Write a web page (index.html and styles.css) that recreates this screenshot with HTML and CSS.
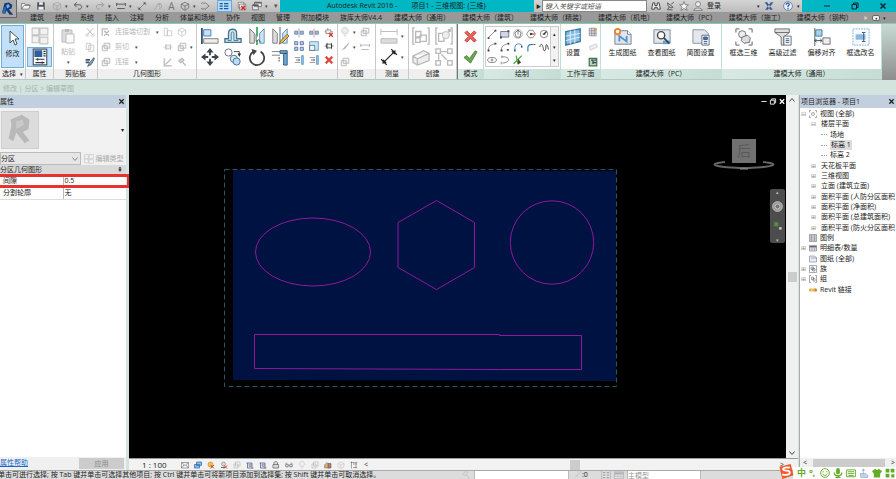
FILE: index.html
```html
<!DOCTYPE html>
<html lang="zh-CN">
<head>
<meta charset="utf-8">
<title>Autodesk Revit 2016</title>
<link rel="stylesheet" href="styles.css">
</head>
<body>
<svg class="sprite" aria-hidden="true">
  <symbol id="logo" viewBox="0 0 16 16"><path d="M4 2l5-1 4 3-1 4-3 1 5 6h-4l-4-5-1 4-4-1z" fill="#123b78"/><path d="M6 4l3-1 1 3-3 2z" fill="#7fb0e6"/><path d="M1 13l3-7 2 1-2 7z" fill="#2d6cb5"/></symbol>
  <symbol id="open" viewBox="0 0 16 16"><path d="M1 13V4h5l1 2h6v2M1 13l4-6h10l-3 6z" fill="#f3f3f3" stroke="#555"/></symbol>
  <symbol id="save" viewBox="0 0 16 16"><path d="M2 2h12v12H2z" fill="#4c5460"/><path d="M5 2h6v4H5zM4 9h8v5H4z" fill="#eee"/></symbol>
  <symbol id="box" viewBox="0 0 16 16"><path d="M2 5l6-3 6 3v6l-6 4-6-4zM2 5l6 3 6-3M8 8v6" fill="none" stroke="currentColor"/></symbol>
  <symbol id="undo" viewBox="0 0 16 16"><path d="M6 2L2 6l4 4M2 6h8c5 0 5 7 0 7H8" fill="none" stroke="currentColor" stroke-width="1.500"/></symbol>
  <symbol id="redo" viewBox="0 0 16 16"><path d="M10 2l4 4-4 4M14 6H6c-5 0-5 7 0 7h2" fill="none" stroke="currentColor" stroke-width="1.500"/></symbol>
  <symbol id="measure" viewBox="0 0 16 16"><path d="M1 3v5M15 3v5M1 5h14M2 12h12" fill="none" stroke="currentColor" stroke-width="1.500"/></symbol>
  <symbol id="dim" viewBox="0 0 16 16"><path d="M3 13L13 3M1 10l5 5M10 1l5 5" fill="none" stroke="currentColor"/><path d="M2 14l1-4 3 3zM14 2l-4 1 3 3z" fill="currentColor"/></symbol>
  <symbol id="tag" viewBox="0 0 16 16"><path d="M2 14l4-5M6 9a4 4 0 1 1 4 3M8 5h4M10 5v4" fill="none" stroke="currentColor"/></symbol>
  <symbol id="circ" viewBox="0 0 16 16"><path d="M6 2l7 6-7 6M6 4a5 5 0 1 0 0 8" fill="none" stroke="currentColor"/></symbol>
  <symbol id="lines" viewBox="0 0 16 16"><path d="M1 4h5M1 8h5M1 12h5M8 4h7M8 8h7M8 12h7" stroke="#175a9b" stroke-width="2"/></symbol>
  <symbol id="closewin" viewBox="0 0 16 16"><path d="M2 2h9v9H2zM4 5h10v9H4z" fill="#eee" stroke="#666"/><path d="M7 8l6 6M13 8l-6 6" stroke="#d22" stroke-width="2"/></symbol>
  <symbol id="wins" viewBox="0 0 16 16"><path d="M4 2h11v7H4zM1 6h9v8H1z" fill="#eee" stroke="#444"/><path d="M4 2h11v2H4zM1 6h9v2H1z" fill="#555"/></symbol>
  <symbol id="binoc" viewBox="0 0 16 16"><path d="M3 3h3v4h4V3h3l2 10h-5v-3H6v3H1z" fill="#eee" stroke="#444" stroke-width="1.500"/></symbol>
  <symbol id="dish" viewBox="0 0 16 16"><path d="M4 3c0 7 5 9 9 7L4 3M7 9l-3 5h8M10 5l4-3" fill="none" stroke="#555" stroke-width="1.500"/></symbol>
  <symbol id="star" viewBox="0 0 16 16"><path d="M8 1l2 5h5l-4 4 2 5-5-3-5 3 2-5-4-4h5z" fill="#f5f5f5" stroke="#555"/></symbol>
  <symbol id="person" viewBox="0 0 16 16"><circle cx="8" cy="5" r="4" fill="#eee" stroke="#555"/><path d="M1 15c1-5 13-5 14 0z" fill="#ddd" stroke="#555"/></symbol>
  <symbol id="exch" viewBox="0 0 16 16"><path d="M1 2h4l9 12h-4zM15 2h-4L2 14h4z" fill="#34589a"/></symbol>
  <symbol id="help" viewBox="0 0 16 16"><circle cx="8" cy="8" r="7" fill="#e8f1ff" stroke="#456"/><path d="M5 6c0-4 6-3 5 0L8 8v2M8 11v2" fill="none" stroke="#245cad" stroke-width="2"/></symbol>
  <symbol id="min" viewBox="0 0 16 16"><path d="M2 8h12" stroke="currentColor" stroke-width="2"/></symbol>
  <symbol id="max" viewBox="0 0 16 16"><path d="M2 5h9v9H2zM5 5V2h9v9h-3" fill="none" stroke="currentColor" stroke-width="2"/></symbol>
  <symbol id="x" viewBox="0 0 16 16"><path d="M3 3l10 10M13 3L3 13" stroke="currentColor" stroke-width="3"/></symbol>
  <symbol id="up" viewBox="0 0 16 16"><path d="M3 11l5-6 5 6" fill="none" stroke="#444" stroke-width="2"/></symbol>
  <symbol id="down" viewBox="0 0 16 16"><path d="M3 5l5 6 5-6" fill="none" stroke="#444" stroke-width="2"/></symbol>
  <symbol id="cursor" viewBox="0 0 16 16"><path d="M5 1v12l3-3 2 5 2-1-2-5h4z" fill="#fff" stroke="#455"/></symbol>
  <symbol id="types" viewBox="0 0 16 16"><path d="M1 1h6v6H1zM8 1h7v6H8zM1 8h6v6H1zM8 9h7v6H8z" fill="#f2f2f2" stroke="#c4c4c4"/></symbol>
  <symbol id="props" viewBox="0 0 16 16"><path d="M2 1h12v14H2z" fill="#fff" stroke="#456"/><path d="M3 2h7v6H3z" fill="#2d5f9f"/><path d="M11 3h2M11 5h2M11 7h2M4 10h8M4 13h8M6 9v2M10 12v2" stroke="#334"/></symbol>
  <symbol id="paste" viewBox="0 0 16 16"><path d="M2 2h10v12H2z" fill="#ddd" stroke="#bbb"/><path d="M5 1h4v3H5z" fill="#bbb"/><path d="M6 6h8v9H6z" fill="#fafafa" stroke="#bbb"/></symbol>
  <symbol id="cut" viewBox="0 0 16 16"><path d="M3 2l9 10M13 2L4 12" stroke="currentColor" stroke-width="1.500"/><circle cx="3" cy="13" r="2" fill="none" stroke="currentColor"/><circle cx="13" cy="13" r="2" fill="none" stroke="currentColor"/></symbol>
  <symbol id="copy" viewBox="0 0 16 16"><path d="M2 2h7v10H2zM6 5h8v10H6z" fill="#f8f8f8" stroke="currentColor"/></symbol>
  <symbol id="match" viewBox="0 0 16 16"><path d="M1 3h7v3H1zM1 7h6v3H1z" fill="#456"/><path d="M14 1L7 10l-3 5 6-3 5-9z" fill="#8ab" stroke="#234"/></symbol>
  <symbol id="joincut" viewBox="0 0 16 16"><path d="M2 2v12M2 3h9M5 6l8 8M13 6l-8 8" stroke="currentColor" stroke-width="2" fill="none"/></symbol>
  <symbol id="boxes" viewBox="0 0 16 16"><path d="M5 2h9v8h-9zM2 6h8v8H2z" fill="#f5f5f5" stroke="currentColor" stroke-width="1.500"/></symbol>
  <symbol id="wall" viewBox="0 0 16 16"><path d="M2 2h5v12H2zM7 6h7v8H7z" fill="none" stroke="currentColor"/></symbol>
  <symbol id="hammer" viewBox="0 0 16 16"><path d="M3 6l5-4 3 3-5 4zM8 7l6 7" fill="#ddd" stroke="currentColor" stroke-width="2"/></symbol>
  <symbol id="angle" viewBox="0 0 16 16"><path d="M2 2v12h12M4 12l9-9" fill="none" stroke="currentColor" stroke-width="2"/></symbol>
  <symbol id="align" viewBox="0 0 20 20"><path d="M1 1v18" stroke="#357" stroke-width="2"/><path d="M3 3h8v7H3z" fill="#c5e3fa" stroke="#47a"/><path d="M3 13h16v5H3z" fill="#eee" stroke="#777"/></symbol>
  <symbol id="offset" viewBox="0 0 20 20"><path d="M1 17h18v-4h-5V7c0-6-9-6-9 0v6H1z" fill="#d4e9f8" stroke="#478" stroke-width="1.500"/><path d="M4 15h4V7c0-2 3-2 3 0v8h5" fill="none" stroke="#478"/></symbol>
  <symbol id="mirror" viewBox="0 0 20 20"><path d="M2 2l5 5v11H2z" fill="#ddd" stroke="#777"/><path d="M18 2l-5 5v11h5z" fill="#c8e5fa" stroke="#68a"/><path d="M10 0v20" stroke="#4a6" stroke-width="2"/><path d="M9 8v8l3-2 2 3" fill="#fff" stroke="#555"/></symbol>
  <symbol id="mirror2" viewBox="0 0 20 20"><path d="M2 2l5 5v11H2z" fill="#ddd" stroke="#777"/><path d="M18 2l-5 5v11h5z" fill="#c8e5fa" stroke="#68a"/><path d="M10 0v18" stroke="#357"/><path d="M18 8l-7 7-2 4 4-2 7-7z" fill="#ecb73e" stroke="#765"/></symbol>
  <symbol id="move" viewBox="0 0 20 20"><path d="M10 0l4 5h-3v3H9V5H6zM10 20l4-5h-3v-3H9v3H6zM0 10l5-4v3h3v2H5v3zM20 10l-5-4v3h-3v2h3v3z" fill="#3d434b"/></symbol>
  <symbol id="copyobj" viewBox="0 0 20 20"><circle cx="5" cy="5" r="4" fill="#fff" stroke="#667"/><path d="M11 4h6v4" fill="none" stroke="#333"/><path d="M15 6l2 4 2-4z" fill="#333"/><circle cx="11" cy="12" r="4" fill="#d0e9fb" stroke="#468"/><circle cx="14" cy="15" r="4" fill="#b8dcf7" stroke="#468"/></symbol>
  <symbol id="rotate" viewBox="0 0 20 20"><path d="M6 4a8 8 0 1 0 8 0" fill="none" stroke="#444" stroke-width="2"/><path d="M4 1l6 2-4 5z" fill="#444"/></symbol>
  <symbol id="trim" viewBox="0 0 20 20"><path d="M1 4h9M1 8h9" stroke="#777"/><path d="M10 3h8v3h-8zM14 6h4v13h-4z" fill="#68aadd" stroke="#357"/><path d="M9 10v6" stroke="#333" stroke-dasharray="2 1"/></symbol>
  <symbol id="split" viewBox="0 0 16 16"><path d="M1 5h5v5H1zM10 5h5v5h-5z" fill="#8fc1e8" stroke="#568"/><path d="M8 1v14" stroke="#777"/></symbol>
  <symbol id="splitr" viewBox="0 0 16 16"><path d="M1 5h5v5H1zM10 5h5v5h-5z" fill="#8fc1e8" stroke="#568"/><path d="M8 1v14" stroke="#e64b4b"/></symbol>
  <symbol id="unpin" viewBox="0 0 16 16"><path d="M3 3h8v6H3zM1 6h2M11 6h3M6 0v3" fill="#eee" stroke="#666"/><path d="M8 8l6 6M14 8l-6 6" stroke="#d33" stroke-width="2"/></symbol>
  <symbol id="pin" viewBox="0 0 16 16"><path d="M4 5h8v6H4zM1 8h3M12 8h3M5 3v10M12 3v10" fill="#eee" stroke="currentColor"/></symbol>
  <symbol id="array" viewBox="0 0 16 16"><path d="M1 1h5v5H1zM10 1h5v5h-5zM1 10h5v5H1zM10 10h5v5h-5z" fill="#a9d4f3" stroke="#347"/></symbol>
  <symbol id="scale" viewBox="0 0 16 16"><path d="M1 1h14v14H1z" fill="#c7e4f9" stroke="#47a"/><path d="M1 7h8v8H1z" fill="#f5f5f5" stroke="#357"/></symbol>
  <symbol id="trims" viewBox="0 0 16 16"><path d="M1 4h9M1 12h9" stroke="#666"/><path d="M12 1h3v14h-3z" fill="#8fc1e8" stroke="#458ac2"/><path d="M3 8h6M7 6l2 2-2 2" fill="none" stroke="#333"/></symbol>
  <symbol id="del" viewBox="0 0 16 16"><path d="M2 4l2-2 4 4 4-4 2 2-4 4 4 4-2 2-4-4-4 4-2-2 4-4z" fill="#e8463f" stroke="#b72c27"/></symbol>
  <symbol id="bulb" viewBox="0 0 16 16"><path d="M6 11c-6-4-3-10 2-10s8 6 2 10zM6 14h4" fill="#eee" stroke="currentColor"/></symbol>
  <symbol id="brush" viewBox="0 0 16 16"><path d="M14 1L7 8l-5 6 7-4 6-8z" fill="currentColor"/></symbol>
  <symbol id="ruler" viewBox="0 0 20 20"><path d="M1 2v7M19 2v7M1 5h18" stroke="currentColor" fill="none"/><path d="M1 13h18v5H1z" fill="#ddd" stroke="currentColor"/></symbol>
  <symbol id="parts" viewBox="0 0 20 20"><path d="M3 1H1v18h2M17 1h2v18h-2M4 5h6v6H4zM9 9h7v7H9zM4 12h5v5H4z" fill="none" stroke="currentColor" stroke-width="1.500"/></symbol>
  <symbol id="asm" viewBox="0 0 20 20"><path d="M3 1H1v18h2M17 1h2v18h-2M4 7h6v9H4z" fill="none" stroke="currentColor" stroke-width="1.500"/><circle cx="12" cy="9" r="4" fill="#eee" stroke="currentColor"/><circle cx="16" cy="4" r="2" fill="currentColor"/></symbol>
  <symbol id="group" viewBox="0 0 20 20"><path d="M1 9l12-6 6 3v8l-13 5-5-3zM1 9l5 3 13-6M6 12v7" fill="#eee" stroke="currentColor" stroke-width="1.500"/></symbol>
  <symbol id="similar" viewBox="0 0 20 20"><path d="M1 1h5v5H1zM14 1h5v5h-5zM1 14h5v5H1zM14 14h5v5h-5zM7 4h6M4 7v6M7 7l6 6" fill="none" stroke="currentColor" stroke-width="1.500"/></symbol>
  <symbol id="no" viewBox="0 0 16 16"><path d="M2 4l2-2 4 4 4-4 2 2-4 4 4 4-2 2-4-4-4 4-2-2 4-4z" fill="#ed6359" stroke="#ca443c"/></symbol>
  <symbol id="yes" viewBox="0 0 16 16"><path d="M1 9l3-2 3 3 6-8 2 1-7 12z" fill="#6da552" stroke="#4d8938"/></symbol>
  <symbol id="line" viewBox="0 0 16 16"><path d="M2 14L14 2" stroke="#444"/><path d="M1 13h3v3H1zM12 1h3v3h-3z" fill="#444"/></symbol>
  <symbol id="rect" viewBox="0 0 16 16"><path d="M1 4h13v9H1z" fill="#d2d8e8" stroke="#445"/><path d="M12 2h3v3h-3zM0 12h3v3H0z" fill="#445"/></symbol>
  <symbol id="poly" viewBox="0 0 16 16"><circle cx="8" cy="8" r="7" fill="none" stroke="#999"/><path d="M8 2l5 4-2 7H5L3 6zM8 1v8" fill="none" stroke="#334"/></symbol>
  <symbol id="polyr" viewBox="0 0 16 16"><path d="M5 2h6l4 6-4 6H5L1 8z" fill="none" stroke="#555"/><path d="M8 8h6" stroke="#e33" stroke-width="2"/><circle cx="8" cy="8" r="2" fill="#444"/></symbol>
  <symbol id="circle" viewBox="0 0 16 16"><circle cx="8" cy="8" r="6" fill="none" stroke="#444"/><path d="M8 8l4-4M6 8h4" stroke="#333" stroke-width="2"/></symbol>
  <symbol id="arc" viewBox="0 0 16 16"><path d="M2 14C2 7 7 3 14 3" fill="none" stroke="#555"/><path d="M1 12h3v3H1zM12 1h3v3h-3z" fill="#444"/></symbol>
  <symbol id="arcc" viewBox="0 0 16 16"><path d="M2 14C2 7 7 3 14 3" fill="none" stroke="#555"/><path d="M1 12h3v3H1zM12 1h3v3h-3zM11 11h3v3h-3z" fill="#444"/></symbol>
  <symbol id="fillet" viewBox="0 0 16 16"><path d="M3 15V9c0-4 3-6 6-6s5 1 5 4" fill="none" stroke="#3689c9" stroke-width="1.500"/><path d="M2 12h2v3H2zM13 6h2v3h-2z" fill="#345"/></symbol>
  <symbol id="corner" viewBox="0 0 16 16"><path d="M3 15V9c0-4 3-5 5-5" fill="none" stroke="#3689c9" stroke-width="2"/><path d="M8 4h7" stroke="#345" stroke-width="1.500" stroke-dasharray="3 1"/></symbol>
  <symbol id="spline" viewBox="0 0 16 16"><path d="M1 8c3-9 5-2 6 3s4 4 4-3 3-4 4 4" fill="none" stroke="#444" stroke-width="1.500"/></symbol>
  <symbol id="ellipse" viewBox="0 0 16 16"><ellipse cx="8" cy="8" rx="7" ry="4" fill="none" stroke="#444"/><path d="M6 8h4M8 6v4" stroke="#444"/></symbol>
  <symbol id="earc" viewBox="0 0 16 16"><path d="M3 3c14-1 14 9 1 10M2 11v4M3 1v4" fill="none" stroke="#444"/></symbol>
  <symbol id="pick" viewBox="0 0 16 16"><path d="M1 14L14 1M5 1l3 14" stroke="#49a943" stroke-width="2"/><path d="M8 6v9l5-3z" fill="#444"/></symbol>
  <symbol id="plane" viewBox="0 0 20 20"><path d="M2 4l16-3v14L2 19z" fill="#85bde3" stroke="#3c75a2" stroke-width="1.500"/><path d="M2 9l16-3M2 14l16-4M7 3v15M12 2v15" stroke="#e7f5ff"/></symbol>
  <symbol id="grid" viewBox="0 0 16 16"><path d="M2 2h11v12H2zM2 6h11M2 10h11M6 2v12M10 2v12" fill="#eee" stroke="#667"/><path d="M11 1l4 2-3 4z" fill="#e9a83c"/></symbol>
  <symbol id="ref" viewBox="0 0 16 16"><path d="M2 7l11-4 2 5-11 5z" fill="#eee" stroke="#bbb"/></symbol>
  <symbol id="viewer" viewBox="0 0 16 16"><path d="M2 2h12v12H2z" fill="#b6d6b8" stroke="#487151" stroke-width="2"/><path d="M5 5h3v6M9 9h4M10 5h3" stroke="#345" stroke-width="2" fill="none"/></symbol>
  <symbol id="sheet" viewBox="0 0 20 20"><path d="M1 3h14l4 4v11H1z" fill="#e0e5ec" stroke="#6b7d92"/><path d="M15 3v4h4" fill="#fff" stroke="#6b7d92"/><path d="M6 15V9l8 6V9" fill="none" stroke="#5590cc" stroke-width="2"/><circle cx="4" cy="4" r="3" fill="#fff" stroke="#e5842a" stroke-width="2"/></symbol>
  <symbol id="look" viewBox="0 0 20 20"><path d="M1 2h18v15H1z" fill="#e3e7ec" stroke="#74869a"/><path d="M11 14h8v4h-8z" fill="#65a1cf"/><circle cx="9" cy="8" r="4" fill="#fff" stroke="#444" stroke-width="1.500"/><path d="M12 11l6 6" stroke="#345" stroke-width="2"/></symbol>
  <symbol id="setsheet" viewBox="0 0 20 20"><path d="M1 2h13l4 4v11H1z" fill="#e4e7eb" stroke="#85909b"/><path d="M11 8h8v11h-8z" fill="#fff" stroke="#4d6682"/><path d="M13 10h4v3h-4zM13 15h4M13 17h4" fill="#3a78bb" stroke="#357"/></symbol>
  <symbol id="sel3d" viewBox="0 0 20 20"><path d="M1 5V1h4M15 1h4v4M19 15v4h-4M5 19H1v-4" fill="none" stroke="#555"/><circle cx="8" cy="7" r="4" fill="#eee" stroke="#667"/><path d="M8 10l6-2 3 3-1 5-6 1-3-3z" fill="#ddd" stroke="#667"/></symbol>
  <symbol id="filter" viewBox="0 0 20 20"><path d="M1 1h16v4l-6 5v9H8v-9L1 5zM1 5h16" fill="#e0e0e0" stroke="#666"/><path d="M11 9h8v10h-8z" fill="#fff" stroke="#567"/><path d="M13 12h4M13 14h4M13 16h4" stroke="#357"/></symbol>
  <symbol id="shift" viewBox="0 0 20 20"><path d="M2 0v20" stroke="#555"/><path d="M3 2h7v7H3z" fill="#a4d3f5" stroke="#478"/><path d="M11 11h8v7h-8z" fill="#eee" stroke="#667"/><path d="M2 14h8M4 12l-2 2 2 2M8 12l2 2-2 2" fill="none" stroke="#345"/></symbol>
  <symbol id="rename" viewBox="0 0 20 20"><path d="M1 1h18v18H1z" fill="#f6fbff" stroke="#7ca8cd" stroke-dasharray="2 1"/><path d="M4 7h11v6H4z" fill="#8cb9de"/><path d="M13 5v10M11 5h4M11 15h4" stroke="#357"/></symbol>
  <symbol id="mail" viewBox="0 0 16 16"><path d="M1 3h14v11H1zM1 3l7 6 7-6M1 14l5-6M15 14l-5-6" fill="none" stroke="#555"/></symbol>
  <symbol id="style" viewBox="0 0 16 16"><path d="M5 2h10v7H5zM1 7h10v7H1z" fill="#8abde6" stroke="#2f6ea9" stroke-width="1.500"/></symbol>
  <symbol id="sun" viewBox="0 0 16 16"><circle cx="7" cy="7" r="5" fill="#f9c14d" stroke="#b56d22"/><path d="M7 8l7 7M14 8l-7 7" stroke="#d43b33" stroke-width="2"/></symbol>
  <symbol id="shadow" viewBox="0 0 16 16"><circle cx="7" cy="6" r="4" fill="#ddd" stroke="#666"/><path d="M2 13h8" stroke="#666" stroke-width="2"/><path d="M8 9l6 6M14 9l-6 6" stroke="#d43b33" stroke-width="2"/></symbol>
  <symbol id="crop" viewBox="0 0 16 16"><path d="M3 4v10h12M1 4h11v11" fill="none" stroke="#369" stroke-width="1.500"/><path d="M6 6h5v5H6z" fill="#9bc3e6" stroke="#c55"/></symbol>
  <symbol id="lock" viewBox="0 0 16 16"><path d="M4 7V4c0-4 7-4 7 0v3M2 7h11v7H2z" fill="#ddd" stroke="#666" stroke-width="1.500"/></symbol>
  <symbol id="glass" viewBox="0 0 16 16"><path d="M1 6l2-3M15 6l-2-3" stroke="#566" fill="none"/><circle cx="4" cy="9" r="3" fill="#ddd" stroke="#566" stroke-width="1.500"/><circle cx="12" cy="9" r="3" fill="#ddd" stroke="#566" stroke-width="1.500"/></symbol>
  <symbol id="house" viewBox="0 0 16 16"><path d="M1 8l5-5 5 5v6H1z" fill="#d8b070" stroke="#666"/><path d="M8 5h6v9H8z" fill="#b77" stroke="#555"/></symbol>
  <symbol id="limits" viewBox="0 0 16 16"><path d="M3 1v14M1 3h14M6 6h8M12 4v11M6 13h8" fill="none" stroke="#555"/></symbol>
  <symbol id="views" viewBox="0 0 16 16"><path d="M4 1H1v4M12 1h3v4M4 15H1v-4M12 15h3v-4" fill="none" stroke="#555"/><circle cx="8" cy="8" r="3" fill="none" stroke="#555"/></symbol>
  <symbol id="legend" viewBox="0 0 16 16"><path d="M1 1h14v14H1z" fill="#eee" stroke="#555"/><path d="M3 4h4M3 8h4M3 12h4M9 4h4M9 8h4M9 12h4" stroke="#456" stroke-width="2"/></symbol>
  <symbol id="family" viewBox="0 0 16 16"><path d="M1 1h14v14H1z" fill="#fff" stroke="#555"/><path d="M4 4h5v5H4zM7 7h5v5H7z" fill="#ddd" stroke="#567"/></symbol>
  <symbol id="groups" viewBox="0 0 16 16"><path d="M4 1H1v14h3M12 1h3v14h-3M5 4h4v5H5zM8 7h4v5H8z" fill="none" stroke="#555"/></symbol>
  <symbol id="table" viewBox="0 0 16 16"><path d="M1 3h14v11H1z" fill="#eee" stroke="#555"/><path d="M1 4h14v3H1z" fill="#668"/><path d="M1 10h14M6 7v7M11 7v7" stroke="#888"/></symbol>
  <symbol id="sheets" viewBox="0 0 16 16"><path d="M1 2h10l4 3v9H1zM4 6h11" fill="#e8eef5" stroke="#567"/></symbol>
  <symbol id="link" viewBox="0 0 16 16"><rect x="0" y="5" width="8" height="6" rx="2" fill="#e5b23d"/><rect x="8" y="5" width="8" height="6" rx="2" fill="#c98a1f"/><path d="M4 8h8" stroke="#fff"/></symbol>
  <symbol id="smile" viewBox="0 0 16 16"><circle cx="8" cy="8" r="7" fill="none" stroke="#63ad25" stroke-width="1.500"/><path d="M5 5v2M11 5v2M4 9c2 4 6 4 8 0" fill="none" stroke="#63ad25" stroke-width="1.500"/></symbol>
  <symbol id="mic" viewBox="0 0 16 16"><rect x="5" y="0" width="6" height="10" rx="3" fill="#63ad25"/><path d="M2 7c0 7 12 7 12 0M8 12v3M4 15h8" fill="none" stroke="#63ad25" stroke-width="2"/></symbol>
  <symbol id="kbd" viewBox="0 0 16 16"><path d="M1 3h14v11H1z" fill="none" stroke="#63ad25" stroke-width="1.500"/><path d="M3 6h10M3 9h10M4 12h8" stroke="#63ad25" stroke-width="1.500"/></symbol>
  <symbol id="hand" viewBox="0 0 16 16"><circle cx="7" cy="3" r="2" fill="#9fb6dc"/><path d="M7 5v5M2 9h9l3 3v3H3z" fill="#c6d4ec" stroke="#839fd0"/></symbol>
  <symbol id="shirt" viewBox="0 0 16 16"><path d="M5 1l3 2 3-2 5 4-3 4v6H3V9L0 5z" fill="#63ad25"/></symbol>
  <symbol id="tiles" viewBox="0 0 16 16"><path d="M1 1h6v6H1zM9 1h6v6H9zM1 9h6v6H1zM10 10h5v5h-5z" fill="#63ad25"/></symbol>
</svg>

<div class="app">
  <header class="titlebar">
    <button class="appmenu" aria-label="应用程序菜单"><svg><use href="#logo"/></svg></button>
    <div class="quick">
      <button aria-label="打开"><svg><use href="#open"/></svg></button>
      <button aria-label="保存"><svg><use href="#save"/></svg></button>
      <button class="dim arrow" aria-label="同步"><svg><use href="#box"/></svg></button>
      <button class="arrow" aria-label="放弃"><svg><use href="#undo"/></svg></button>
      <button class="dim arrow" aria-label="重做"><svg><use href="#redo"/></svg></button>
      <button class="arrow" aria-label="测量"><svg><use href="#measure"/></svg></button>
      <button aria-label="尺寸标注"><svg><use href="#dim"/></svg></button>
      <button class="dim" aria-label="标记"><svg><use href="#tag"/></svg></button>
      <button class="letter" aria-label="文字">A</button>
      <button class="arrow" aria-label="三维"><svg><use href="#box"/></svg></button>
      <button aria-label="剖面"><svg><use href="#circ"/></svg></button>
      <button class="on" aria-label="细线"><svg><use href="#lines"/></svg></button>
      <button aria-label="关闭隐藏窗口"><svg><use href="#closewin"/></svg></button>
      <button class="arrow" aria-label="切换窗口"><svg><use href="#wins"/></svg></button>
      <button class="more" aria-label="自定义">▾</button>
    </div>
    <h1><span>Autodesk Revit 2016 -</span><span>项目1 - 三维视图: {三维}</span></h1>
    <div class="info">
      <span class="tri">▶</span>
      <input type="text" placeholder="键入关键字或短语" aria-label="搜索">
      <button aria-label="查找"><svg><use href="#binoc"/></svg></button>
      <button aria-label="通讯"><svg><use href="#dish"/></svg></button>
      <button aria-label="收藏"><svg><use href="#star"/></svg></button>
      <button class="login"><svg><use href="#person"/></svg>登录</button>
      <span class="dot">▾</span>
      <button aria-label="Exchange"><svg><use href="#exch"/></svg></button>
      <button class="help" aria-label="帮助"><svg><use href="#help"/></svg></button>
      <span class="dot end">▾</span>
    </div>
    <div class="winbtns">
      <button aria-label="最小化"><svg><use href="#min"/></svg></button>
      <button aria-label="还原"><svg><use href="#max"/></svg></button>
      <button aria-label="关闭"><svg><use href="#x"/></svg></button>
    </div>
  </header>

  <nav class="tabs">
    <a href="#">建筑</a><a href="#">结构</a><a href="#">系统</a><a href="#">插入</a><a href="#">注释</a><a href="#">分析</a><a href="#">体量和场地</a><a href="#">协作</a><a href="#">视图</a><a href="#">管理</a><a href="#">附加模块</a><a href="#">族库大师V4.4</a><a class="addin" href="#">建模大师（通用）</a><a class="addin" href="#">建模大师（建筑）</a><a class="addin" href="#">建模大师（精装）</a><a class="addin" href="#">建模大师（机电）</a><a class="addin" href="#">建模大师（PC）</a><a class="addin" href="#">建模大师（施工）</a><a class="addin" href="#">建模大师（钢构）</a>
    <span class="tabmore">»</span><button class="tabfold" aria-label="收拢">▪</button><span class="tabcaret">▾</span>
  </nav>

  <div class="ribbon">
    <section class="panel">
      <div class="body"><button class="tall on modify"><svg class="lg"><use href="#cursor"/></svg>修改</button></div>
      <h2>选择 <i>▾</i></h2>
    </section>
    <section class="panel">
      <div class="body stack">
        <button class="big" aria-label="族类型"><svg class="lg"><use href="#types"/></svg></button>
        <button class="big on" aria-label="属性"><svg class="lg"><use href="#props"/></svg></button>
      </div>
      <h2>属性</h2>
    </section>
    <section class="panel">
      <div class="body clip">
        <button class="tall off"><svg class="lg"><use href="#paste"/></svg>粘贴<i>▾</i></button>
        <div class="rows3">
          <button class="off" aria-label="剪切"><svg><use href="#cut"/></svg></button>
          <button class="off" aria-label="复制"><svg><use href="#copy"/></svg></button>
          <button aria-label="匹配类型"><svg><use href="#match"/></svg></button>
        </div>
      </div>
      <h2>剪贴板</h2>
    </section>
    <section class="panel">
      <div class="body geom off">
        <button class="txt"><svg><use href="#joincut"/></svg>连接端切割<i>▾</i></button>
        <button aria-label="拆分面"><svg><use href="#wall"/></svg></button>
        <button aria-label="填色"><svg><use href="#box"/></svg></button>
        <button class="txt"><svg><use href="#boxes"/></svg>剪切<i>▾</i></button>
        <button aria-label="墙连接"><svg><use href="#pin"/></svg></button>
        <button class="arrow" aria-label="梁连接"><svg><use href="#boxes"/></svg></button>
        <button class="txt"><svg><use href="#boxes"/></svg>连接<i>▾</i></button>
        <button aria-label="柱连接"><svg><use href="#angle"/></svg></button>
        <button aria-label="拆除"><svg><use href="#hammer"/></svg></button>
      </div>
      <h2>几何图形</h2>
    </section>
    <section class="panel">
      <div class="body edit">
        <div class="bigs">
          <button aria-label="对齐"><svg class="lg"><use href="#align"/></svg></button>
          <button aria-label="偏移"><svg class="lg"><use href="#offset"/></svg></button>
          <button aria-label="镜像拾取"><svg class="lg"><use href="#mirror"/></svg></button>
          <button aria-label="镜像绘制"><svg class="lg"><use href="#mirror2"/></svg></button>
          <button aria-label="移动"><svg class="lg"><use href="#move"/></svg></button>
          <button aria-label="复制"><svg class="lg"><use href="#copyobj"/></svg></button>
          <button aria-label="旋转"><svg class="lg"><use href="#rotate"/></svg></button>
          <button aria-label="修剪"><svg class="lg"><use href="#trim"/></svg></button>
        </div>
        <div class="smalls">
          <button aria-label="拆分"><svg><use href="#split"/></svg></button>
          <button aria-label="间隙拆分"><svg><use href="#splitr"/></svg></button>
          <button aria-label="解锁"><svg><use href="#unpin"/></svg></button>
          <button aria-label="阵列"><svg><use href="#array"/></svg></button>
          <button aria-label="缩放"><svg><use href="#scale"/></svg></button>
          <button aria-label="锁定"><svg><use href="#pin"/></svg></button>
          <button aria-label="延伸单个"><svg><use href="#trims"/></svg></button>
          <button aria-label="延伸多个"><svg><use href="#trims"/></svg></button>
          <button aria-label="删除"><svg><use href="#del"/></svg></button>
        </div>
      </div>
      <h2>修改</h2>
    </section>
    <section class="panel">
      <div class="body viewp off">
        <button class="arrow" aria-label="隐藏"><svg><use href="#bulb"/></svg></button>
        <button aria-label="替换"><svg><use href="#boxes"/></svg></button>
        <button class="arrow" aria-label="画笔"><svg><use href="#brush"/></svg></button>
        <button aria-label="线处理"><svg><use href="#measure"/></svg></button>
        <button aria-label="置换"><svg><use href="#boxes"/></svg></button>
      </div>
      <h2>视图</h2>
    </section>
    <section class="panel">
      <div class="body stack">
        <button class="arrow off" aria-label="测量"><svg class="lg"><use href="#ruler"/></svg></button>
        <button class="arrow" aria-label="尺寸"><svg class="lg"><use href="#dim"/></svg></button>
      </div>
      <h2>测量</h2>
    </section>
    <section class="panel">
      <div class="body four off">
        <button aria-label="零件"><svg class="lg"><use href="#parts"/></svg></button>
        <button aria-label="部件"><svg class="lg"><use href="#asm"/></svg></button>
        <button aria-label="组"><svg class="lg"><use href="#group"/></svg></button>
        <button aria-label="类似"><svg class="lg"><use href="#similar"/></svg></button>
      </div>
      <h2>创建</h2>
    </section>
    <section class="panel ctx first">
      <div class="body stack mode">
        <button aria-label="取消"><svg><use href="#no"/></svg></button>
        <button aria-label="完成"><svg><use href="#yes"/></svg></button>
      </div>
      <h2>模式</h2>
    </section>
    <section class="panel ctx">
      <div class="body draw">
        <div class="gallery">
          <button aria-label="线"><svg><use href="#line"/></svg></button>
          <button aria-label="矩形"><svg><use href="#rect"/></svg></button>
          <button aria-label="内接多边形"><svg><use href="#poly"/></svg></button>
          <button aria-label="外接多边形"><svg><use href="#polyr"/></svg></button>
          <button aria-label="圆形"><svg><use href="#circle"/></svg></button>
          <button aria-label="弧"><svg><use href="#arc"/></svg></button>
          <button aria-label="圆心弧"><svg><use href="#arcc"/></svg></button>
          <button aria-label="切线弧"><svg><use href="#fillet"/></svg></button>
          <button aria-label="圆角弧"><svg><use href="#corner"/></svg></button>
          <button aria-label="样条"><svg><use href="#spline"/></svg></button>
          <button aria-label="椭圆"><svg><use href="#ellipse"/></svg></button>
          <button aria-label="半椭圆"><svg><use href="#earc"/></svg></button>
          <button aria-label="拾取线"><svg><use href="#pick"/></svg></button>
        </div>
        <div class="spin"><button aria-label="上">▴</button><button aria-label="下">▾</button><button aria-label="展开">▾</button></div>
      </div>
      <h2>绘制</h2>
    </section>
    <section class="panel ctx">
      <div class="body wp">
        <button class="cmd"><svg class="lg"><use href="#plane"/></svg>设置</button>
        <div class="rows3">
          <button aria-label="显示"><svg><use href="#grid"/></svg></button>
          <button aria-label="参照平面"><svg><use href="#ref"/></svg></button>
          <button aria-label="查看器"><svg><use href="#viewer"/></svg></button>
        </div>
      </div>
      <h2>工作平面</h2>
    </section>
    <section class="panel ctx">
      <div class="body cmds">
        <button class="cmd"><svg class="lg"><use href="#sheet"/></svg>生成图纸</button>
        <button class="cmd"><svg class="lg"><use href="#look"/></svg>查看图纸</button>
        <button class="cmd"><svg class="lg"><use href="#setsheet"/></svg>简图设置</button>
      </div>
      <h2>建模大师（PC）</h2>
    </section>
    <section class="panel ctx">
      <div class="body cmds">
        <button class="cmd"><svg class="lg"><use href="#sel3d"/></svg>框选三维</button>
        <button class="cmd"><svg class="lg"><use href="#filter"/></svg>高级过滤</button>
        <button class="cmd"><svg class="lg"><use href="#shift"/></svg>偏移对齐</button>
        <button class="cmd"><svg class="lg"><use href="#rename"/></svg>框选改名</button>
      </div>
      <h2>建模大师（通用）</h2>
    </section>
    <div class="rest"></div>
  </div>

  <div class="options">修改 | 分区 &gt; 编辑草图</div>

  <main class="work">
    <aside class="props">
      <div class="head"><h3>属性</h3><button aria-label="关闭属性"><svg><use href="#x"/></svg></button></div>
      <div class="preview">
        <svg class="thumb" viewBox="0 0 38 38"><path d="M9 8l12-5 8 5-1 10-6 3 7 9-5 3-9-11-3 9-5-3 3-14z" fill="#b9b9b9"/><path d="M15 10l7-2 1 6-8 4z" fill="#c9c9c9"/></svg>
        <span>▾</span>
      </div>
      <div class="typeline">
        <div class="pick"><select aria-label="类型"><option>分区</option></select><svg><use href="#down"/></svg></div>
        <button disabled><svg><use href="#types"/></svg>编辑类型</button>
      </div>
      <div class="section"><span>分区几何图形</span><span>⇞</span></div>
      <table>
        <tr class="marked"><th scope="row">间隙</th><td>0.5</td></tr>
        <tr><th scope="row">分割轮廓</th><td>无</td></tr>
      </table>
      <div class="foot"><a href="#">属性帮助</a><button disabled>应用</button></div>
    </aside>

    <section class="view">
      <div class="canvas">
        <svg class="model" viewBox="0 0 657 363" preserveAspectRatio="xMinYMin meet" fill="none">
          <path d="M104 75l383 1v210l-383-1z" fill="#001242"/>
          <path d="M95.500 74.500h392v217h-392z" stroke="#2a5663" stroke-dasharray="5 3"/>
          <g stroke="#8d1a9b">
            <ellipse cx="184" cy="157" rx="57.500" ry="34"/>
            <path d="M307.500 105.500l38 22v45l-38 22-38.500-22v-45z"/>
            <circle cx="423" cy="147.500" r="41.700"/>
            <path d="M125.500 239.500h245v1h82v34h-82l-245-1z"/>
          </g>
        </svg>
        <div class="docbtns"><button aria-label="最小化视图"><svg><use href="#min"/></svg></button><button aria-label="还原视图"><svg><use href="#max"/></svg></button><button aria-label="关闭视图"><svg><use href="#x"/></svg></button></div>
        <div class="cube"><svg viewBox="0 0 64 12"><path d="M13 3C-6 5 2 8 28 9h8c26-1 34-4 15-6" fill="none" stroke="#666" stroke-width="2"/><path d="M28 10h8" stroke="#999"/></svg><span>后</span></div>
        <div class="navbar"><i>▴</i><svg viewBox="0 0 16 16"><circle cx="8" cy="8" r="6" fill="#999" stroke="#ccc"/><circle cx="8" cy="8" r="3" fill="#777" stroke="#ccc"/></svg><svg viewBox="0 0 16 16"><path d="M4 4h5v5H4z" fill="#5c8d45"/><path d="M10 10h3v3h-3z" fill="#ccc"/></svg><i>▾</i></div>
      </div>
      <div class="vscroll"><svg><use href="#up"/></svg><b></b><svg><use href="#down"/></svg></div>
      <div class="viewbar">
        <span class="scale">1 : 100</span>
        <button aria-label="详细程度"><svg><use href="#mail"/></svg></button>
        <button aria-label="视觉样式"><svg><use href="#style"/></svg></button>
        <button aria-label="日光"><svg><use href="#sun"/></svg></button>
        <button aria-label="阴影"><svg><use href="#shadow"/></svg></button>
        <button class="off" aria-label="渲染"><svg><use href="#boxes"/></svg></button>
        <button aria-label="裁剪"><svg><use href="#crop"/></svg></button>
        <button aria-label="裁剪区域"><svg><use href="#crop"/></svg></button>
        <button aria-label="锁定视图"><svg><use href="#lock"/></svg></button>
        <button aria-label="临时隐藏"><svg><use href="#glass"/></svg></button>
        <button class="off" aria-label="显示隐藏"><svg><use href="#bulb"/></svg></button>
        <button class="off" aria-label="临时属性"><svg><use href="#boxes"/></svg></button>
        <button aria-label="分析模型"><svg><use href="#house"/></svg></button>
        <button class="off" aria-label="位移集"><svg><use href="#box"/></svg></button>
        <button aria-label="约束"><svg><use href="#limits"/></svg></button>
        <span class="lt">&lt;</span>
        <div class="hscroll"><b></b><i>&gt;</i></div>
      </div>
    </section>

    <aside class="browser">
      <div class="head"><h3>项目浏览器 - 项目1</h3><button aria-label="关闭浏览器"><svg><use href="#x"/></svg></button></div>
      <ul class="tree">
        <li><i>⊟</i><svg><use href="#views"/></svg>视图 (全部)</li>
        <li class="l2"><i>⊟</i>楼层平面</li>
        <li class="l3">场地</li>
        <li class="l3"><mark>标高 1</mark></li>
        <li class="l3">标高 2</li>
        <li class="l2"><i>⊞</i>天花板平面</li>
        <li class="l2"><i>⊞</i>三维视图</li>
        <li class="l2"><i>⊞</i>立面 (建筑立面)</li>
        <li class="l2"><i>⊞</i>面积平面 (人防分区面积</li>
        <li class="l2"><i>⊞</i>面积平面 (净面积)</li>
        <li class="l2"><i>⊞</i>面积平面 (总建筑面积)</li>
        <li class="l2"><i>⊞</i>面积平面 (防火分区面积</li>
        <li><i></i><svg><use href="#legend"/></svg>图例</li>
        <li><i>⊞</i><svg><use href="#table"/></svg>明细表/数量</li>
        <li><i></i><svg><use href="#sheets"/></svg>图纸 (全部)</li>
        <li><i>⊞</i><svg><use href="#family"/></svg>族</li>
        <li><i>⊞</i><svg><use href="#groups"/></svg>组</li>
        <li><i></i><svg><use href="#link"/></svg>Revit 链接</li>
      </ul>
      <div class="bscroll"><i>&lt;</i><b></b><i>&gt;</i></div>
    </aside>
  </main>

  <footer class="status">
    <p>单击可进行选择; 按 Tab 键并单击可选择其他项目; 按 Ctrl 键并单击可将新项目添加到选择集; 按 Shift 键并单击可取消选择。</p>
    <svg class="off"><use href="#hammer"/></svg>
    <select class="workset" aria-label="工作集"><option></option></select>
    <span class="count"><svg class="off"><use href="#brush"/></svg>:0</span>
    <svg class="off"><use href="#legend"/></svg>
    <svg class="off"><use href="#table"/></svg>
    <select class="option" aria-label="设计选项"><option>主模型</option></select>
  </footer>
  <div class="ime">
    <svg class="sogou" viewBox="0 0 16 16"><path d="M1 3l12-3 3 12-12 4z" fill="#f0592a"/><path d="M12 4c-3-1-8 0-7 2s7 0 7 3-5 3-8 2" fill="none" stroke="#fff" stroke-width="2"/></svg>
    <b>中</b><b>°,</b><svg><use href="#smile"/></svg><svg><use href="#mic"/></svg><svg><use href="#kbd"/></svg><svg><use href="#hand"/></svg><svg><use href="#shirt"/></svg><svg><use href="#tiles"/></svg>
  </div>
</div>
</body>
</html>
```
FILE: styles.css
```css
* { box-sizing: border-box; }
body {
  margin: 0;
  font: 7px/10px "Open Sans", "Noto Sans CJK SC", sans-serif;
  color: #222;
  background: #d3e3dd;
}
.sprite { position: absolute; width: 0; height: 0; }
svg { display: block; width: 10px; height: 10px; flex: none; }
svg.lg { width: 18px; height: 18px; }
button, input, select { font: inherit; color: inherit; }
button {
  display: flex;
  align-items: center;
  justify-content: center;
  padding: 0;
  border: 0;
  background: none;
  white-space: nowrap;
}
h1, h2, h3, p, ul { margin: 0; padding: 0; font: inherit; }
a { color: inherit; text-decoration: none; }
i { font-style: normal; font-size: 5px; }
.off { color: #b9b9b9; }
svg.off { opacity: 0.4; }
.app {
  position: relative;
  display: flex;
  flex-direction: column;
  height: 100vh;
  overflow: hidden;
}

/* title bar */
.titlebar { display: flex; height: 12px; background: #00b7c3; }
.appmenu {
  position: relative;
  z-index: 1;
  width: 17px;
  height: 18px;
  background: #aaa;
  border: solid #666;
  border-width: 0 1px 1px 0;
}
.appmenu svg { width: 14px; height: 15px; }
.quick {
  display: flex;
  justify-content: space-between;
  width: 263px;
  padding: 0 2px 0 4px;
  background: linear-gradient(#d4d4d4, #bdbdbd);
  color: #555;
}
.quick .dim { color: #999; }
.quick .letter { font-size: 10px; line-height: 12px; color: #777; }
.arrow::after { content: "▾"; font-size: 5px; margin-left: 3px; color: #444; }
.quick .on { width: 15px; background: #b5dcf8; border: 1px solid #6aa9d9; }
.titlebar h1 {
  flex: 1;
  display: flex;
  gap: 14px;
  padding-left: 47px;
  line-height: 12px;
  white-space: nowrap;
}
.info {
  display: flex;
  align-items: center;
  width: 268px;
  gap: 4px;
  background: linear-gradient(#d4d4d4, #bdbdbd);
}
.info .tri { width: 4px; font-size: 5px; padding-left: 2px; }
.info input {
  width: 105px;
  height: 12px;
  padding: 0 2px;
  border: 1px solid #888;
  background: #fff;
  font-style: italic;
}
.info input::placeholder { color: #555; }
.info .login { gap: 4px; }
.info .dot { font-size: 5px; margin-left: auto; }
.info .help { margin-left: 5px; }
.info .end { margin: 0; padding-right: 2px; }
.winbtns { display: flex; width: 94px; padding: 0 9px 0 21px; justify-content: space-between; color: #123; }
.winbtns svg { width: 8px; height: 8px; }

/* tabs */
.tabs {
  display: flex;
  align-items: center;
  gap: 11px;
  height: 12px;
  padding-left: 30px;
  background: #999;
  border-bottom: 1px solid #7ecfb0;
  white-space: nowrap;
}
.tabs .addin { margin-left: 1px; }
.tabmore { color: #fff; }
.tabfold { width: 8px; height: 6px; margin-left: -6px; background: #eee; border: 1px solid #666; border-radius: 2px; font-size: 5px; }
.tabcaret { margin-left: -8px; font-size: 5px; }

/* ribbon */
.ribbon {
  display: grid;
  grid-template-columns: 26px 28px 44px 99px 141px 38px 33px 48px 27px 77px 40px 121px 160px 1fr;
  height: 56px;
}
.panel {
  display: flex;
  flex-direction: column;
  background: #fff;
  border-right: 1px solid #c9c9c9;
  border-bottom: 1px solid #b5c9c1;
}
.panel .body { flex: 1; min-height: 0; }
.panel h2 { height: 10px; text-align: center; background: #efefef; white-space: nowrap; }
.panel h2 i { margin-left: 2px; }
.panel.ctx { border-right-color: #bfe0d4; }
.panel.ctx h2 { background: linear-gradient(90deg, #d8e9e3, #c5ddd5); }
.panel.first { border-left: 1px solid #777; }
.rest { background: linear-gradient(#c8dad3, #8e8e8e); }
.tall { flex-direction: column; justify-content: flex-start; width: 100%; height: 43px; gap: 3px; padding-top: 4px; }
.tall i { line-height: 4px; color: #444; }
.modify { width: 23px; margin: 1px 1px 0; }
.tall svg.lg { width: 16px; height: 16px; }
.panel .on { background: #c2e0fa; border: 1px solid #72add8; }
.stack { display: grid; grid-template-rows: 1fr 1fr; padding: 2px 1px; }
.clip { display: grid; grid-template-columns: 28px 1fr; }
.rows3 { display: grid; grid-template-rows: repeat(3, 1fr); }
.geom { display: grid; grid-template: repeat(3, 1fr) / 62px 14px 18px; padding-left: 3px; }
.geom button { justify-content: flex-start; }
.geom .txt { gap: 4px; }
.geom .txt i { margin-left: 2px; color: #444; }
.edit { display: grid; grid-template-columns: 94px 1fr; padding: 2px 1px; }
.bigs { display: grid; grid-template: 1fr 1fr / repeat(4, 1fr); }
.smalls { display: grid; grid-template: repeat(3, 1fr) / repeat(3, 1fr); }
.viewp { display: grid; grid-template: repeat(3, 1fr) / 20px 1fr; padding-left: 2px; }
.viewp button { justify-content: flex-start; }
.four { display: grid; grid-template: 1fr 1fr / 1fr 1fr; padding: 2px 1px; }
.mode svg { width: 15px; height: 15px; }
.draw { display: flex; margin: 2px 1px; border: 1px solid #ccc; min-height: 0; }
.gallery { flex: 1; display: grid; grid-template: repeat(3, 1fr) / repeat(5, 1fr); }
.spin { display: grid; width: 8px; border-left: 1px solid #ccc; background: #f2f2f2; font-size: 5px; }
.wp { display: grid; grid-template-columns: 24px 1fr; }
.cmd { flex-direction: column; justify-content: flex-start; gap: 2px; padding-top: 4px; }
.cmds { display: grid; grid-auto-flow: column; grid-auto-columns: 39px; padding-left: 2px; }

.options { height: 15px; padding: 4px 3px 0; color: #a5b3ad; }

/* work area */
.work { flex: 1; display: flex; min-height: 0; }
.head {
  display: flex;
  align-items: center;
  justify-content: space-between;
  height: 13px;
  background: #c1cfdf;
}
.head button { padding-right: 1px; }
.head svg { width: 7px; height: 7px; }
.props {
  display: flex;
  flex-direction: column;
  width: 126px;
  margin-right: 3px;
  background: #fff;
}
.preview {
  display: flex;
  align-items: center;
  justify-content: space-between;
  height: 44px;
  padding: 0 2px 0 1px;
  background: #f2f2f2;
  font-size: 6px;
}
.thumb { width: 38px; height: 38px; background: #dcdcdc; border: 1px solid #cfcfcf; }
.typeline { display: flex; height: 13px; background: #f0f0f0; }
select { appearance: none; border: 1px solid #bbb; border-radius: 0; padding: 0; }
.pick { display: grid; align-items: center; width: 81px; }
.pick > * { grid-area: 1 / 1; }
.pick select { width: 100%; height: 13px; background: #e6e6e6; }
.pick svg { justify-self: end; width: 8px; height: 8px; margin-right: 2px; opacity: 0.6; pointer-events: none; }
.typeline button { flex: 1; gap: 2px; color: #aaa; }
.section { display: flex; justify-content: space-between; height: 10px; padding-right: 3px; background: #d9d9d9; }
.props table { width: 100%; border-collapse: collapse; table-layout: fixed; }
.props th, .props td { height: 12px; padding: 0 0 0 3px; border-bottom: 1px solid #ddd; text-align: left; font-weight: normal; line-height: 10px; }
.props td { padding-left: 1px; border-left: 1px solid #bbb; }
.marked { position: relative; }
.marked th::after {
  content: "";
  position: absolute;
  inset: -1px -4px -1px -3px;
  border: 3px solid #e8322f;
}
.foot { display: flex; justify-content: space-between; margin-top: auto; height: 13px; padding: 1px 2px 1px 0; background: #f0f0f0; }
.foot a { color: #1569c7; text-decoration: underline; }
.foot button { width: 45px; background: #ccc; color: #888; }

.view { flex: 1; display: grid; grid-template: 1fr 12px / 1fr 12px; min-width: 0; }
.canvas { position: relative; background: #000; overflow: hidden; }
.model { width: 100%; height: 100%; }
.docbtns { position: absolute; top: 3px; right: 0; display: flex; gap: 1px; color: #fff; }
.docbtns svg { width: 8px; height: 7px; }
.cube { position: absolute; top: 43px; right: 10px; width: 64px; height: 34px; }
.cube svg { position: absolute; top: 21px; width: 64px; height: 12px; }
.cube span {
  position: absolute;
  top: 1px;
  left: 20px;
  width: 24px;
  height: 24px;
  background: #717171;
  color: #5a5a5a;
  font-size: 14px;
  line-height: 23px;
  text-align: center;
}
.navbar {
  position: absolute;
  top: 94px;
  right: 1px;
  display: flex;
  flex-direction: column;
  align-items: center;
  justify-content: space-between;
  width: 15px;
  height: 54px;
  background: #4c4c4c;
  border-radius: 2px;
  color: #bbb;
}
.navbar i { line-height: 6px; }
.navbar svg { width: 13px; height: 13px; }
.vscroll { display: flex; flex-direction: column; align-items: center; justify-content: space-between; background: #f0f0f0; }
.vscroll b { width: 9px; height: 10px; background: #ccc; }
.vscroll svg { width: 8px; height: 10px; }
.viewbar {
  grid-column: 1 / 3;
  display: flex;
  align-items: center;
  gap: 3px;
  padding-left: 13px;
  background: #f2f2f2;
  border-top: 1px solid #999;
}
.viewbar svg { width: 10px; height: 8px; }
.viewbar i, .bscroll i { font-size: 7px; }
.scale { width: 35px; font-size: 8px; white-space: nowrap; }
.viewbar .lt { margin-left: 2px; }
.hscroll { flex: 1; display: flex; justify-content: flex-end; gap: 200px; padding-right: 14px; }
.hscroll b { width: 10px; height: 10px; background: #ccc; }

.browser {
  display: flex;
  flex-direction: column;
  width: 97px;
  margin-left: 1px;
  background: #fff;
  border-left: 1px solid #aaa;
  overflow: hidden;
}
.browser .head { padding-left: 1px; white-space: nowrap; }
.tree { display: grid; grid-auto-rows: 1fr; height: 186px; margin-top: 1px; list-style: none; white-space: nowrap; }
.tree li { display: flex; align-items: center; gap: 3px; padding-left: 1px; }
.tree i { width: 5px; color: #888; font-size: 6px; }
.tree svg { width: 8px; height: 8px; }
.tree .l2 { padding-left: 11px; gap: 5px; }
.tree .l3 { padding-left: 30px; }
.tree .l3::before { content: ""; width: 6px; margin-left: -9px; border-top: 1px dotted #aaa; }
.tree mark { background: #ddd; color: inherit; padding: 0 1px; }
.bscroll { display: flex; align-items: center; justify-content: space-between; margin-top: auto; height: 12px; padding: 0 1px 2px 3px; background: #f0f0f0; }
.bscroll b { width: 72px; height: 8px; background: #ccc; }

/* status bar */
.status { display: flex; align-items: center; gap: 3px; height: 9px; background: #dcdcdc; border-top: 1px solid #aaa; white-space: nowrap; overflow: hidden; }
.status p { width: 458px; text-indent: -2px; }
.status select { height: 10px; background: #fff; color: #999; }
.workset { width: 95px; }
.option { width: 74px; }
.count { display: flex; width: 26px; }
.ime {
  position: absolute;
  right: 0;
  bottom: 0;
  display: flex;
  align-items: center;
  gap: 3px;
  width: 103px;
  height: 12px;
  padding: 0 1px 0 4px;
  background: #fff;
  color: #63ad25;
}
.ime b { width: 10px; font-size: 9px; white-space: nowrap; }
.ime .sogou { position: absolute; left: -15px; top: -3px; width: 16px; height: 15px; }
```
